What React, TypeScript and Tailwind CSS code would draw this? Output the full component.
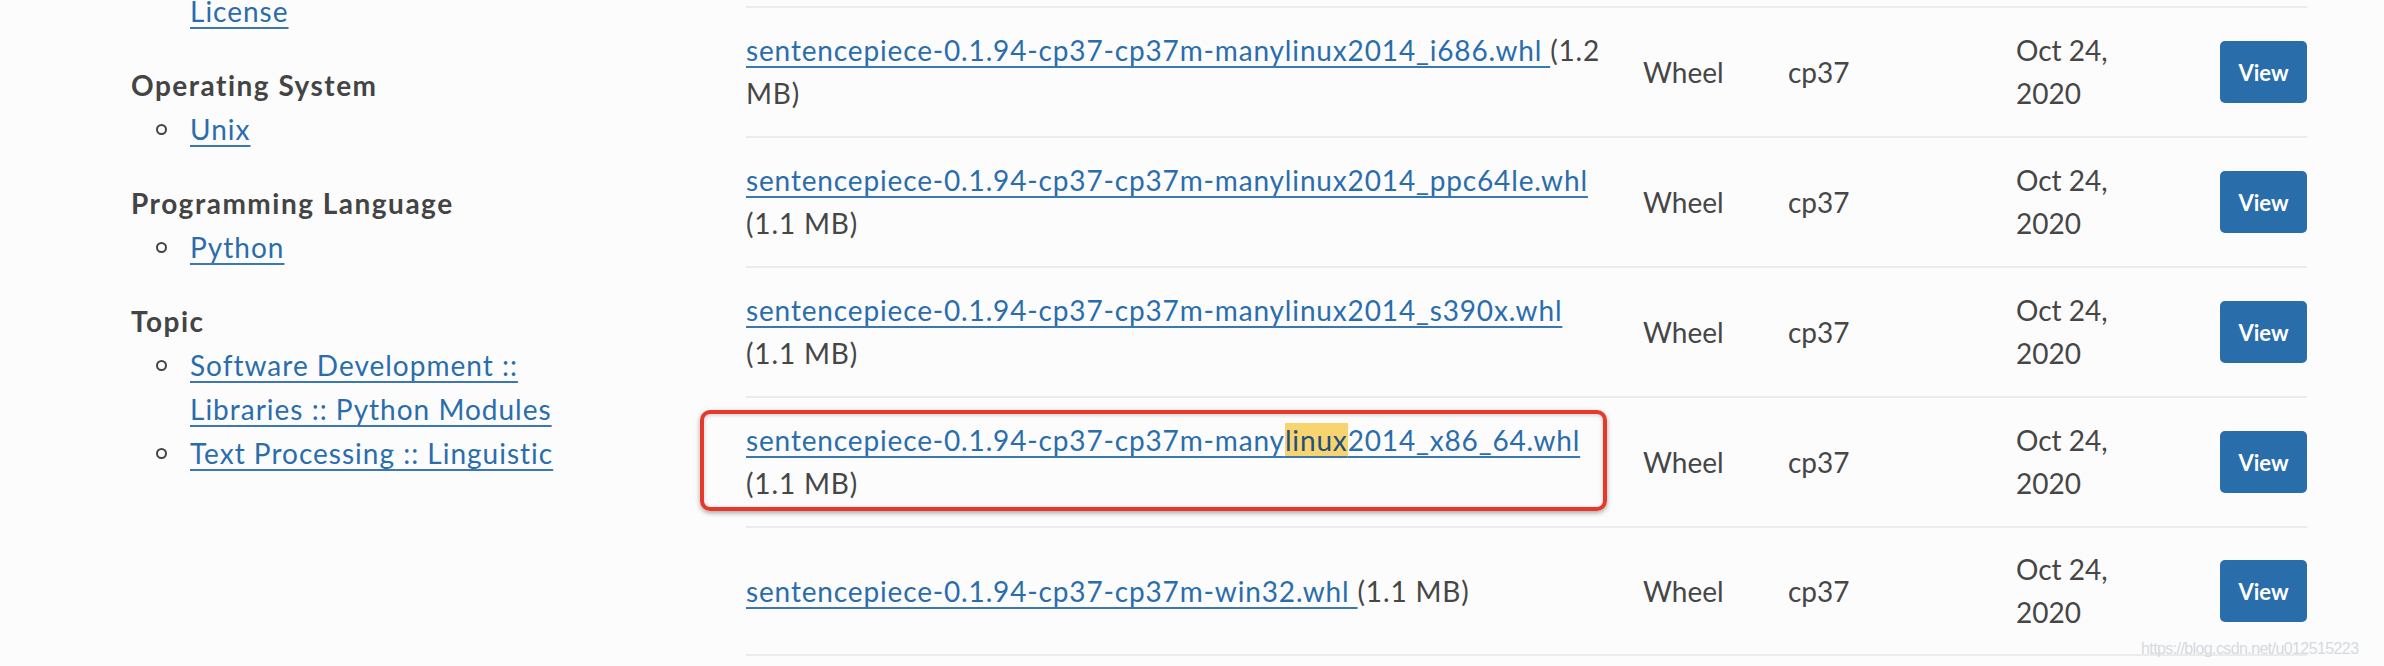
import React from 'react';

type FileRow = {
  name: string;
  size: string;
  mark?: [string, string, string];
};

const FILES: FileRow[] = [
  { name: 'sentencepiece-0.1.94-cp37-cp37m-manylinux2014_i686.whl', size: '1.2 MB' },
  { name: 'sentencepiece-0.1.94-cp37-cp37m-manylinux2014_ppc64le.whl', size: '1.1 MB' },
  { name: 'sentencepiece-0.1.94-cp37-cp37m-manylinux2014_s390x.whl', size: '1.1 MB' },
  {
    name: 'sentencepiece-0.1.94-cp37-cp37m-manylinux2014_x86_64.whl',
    size: '1.1 MB',
    mark: ['sentencepiece-0.1.94-cp37-cp37m-many', 'linux', '2014_x86_64.whl'],
  },
  { name: 'sentencepiece-0.1.94-cp37-cp37m-win32.whl', size: '1.1 MB' },
];

const CLASSIFIERS = [
  { title: 'Operating System', items: [['Unix']] },
  { title: 'Programming Language', items: [['Python']] },
  {
    title: 'Topic',
    items: [['Software Development ::', 'Libraries :: Python Modules'], ['Text Processing :: Linguistic']],
  },
];

const linkCls =
  'text-[#2a6dac] underline decoration-2 underline-offset-[5px] decoration-[#3b78b3]';

const Sidebar = () => (
  <div className="w-[746px] shrink-0 pl-[131px] -mt-[11px] leading-[44px]">
    <div className="mb-[30px] pl-[59px] tracking-[1px]">
      <a href="#" className={linkCls}>License</a>
    </div>
    {CLASSIFIERS.map((c) => (
      <div key={c.title} className="mb-[30px]">
        <h6 className="font-bold tracking-[1.5px] text-[#444]">{c.title}</h6>
        <ul>
          {c.items.map((lines) => (
            <li key={lines[0]} className="flex items-start">
              <span className="mt-[17px] ml-[25px] mr-[23px] h-[11px] w-[11px] shrink-0 rounded-full border-2 border-[#444]" />
              <a href="#" className={`${linkCls} tracking-[1px]`}>
                {lines.map((l, i) => (
                  <React.Fragment key={l}>
                    {i > 0 && <br />}
                    {l}
                  </React.Fragment>
                ))}
              </a>
            </li>
          ))}
        </ul>
      </div>
    ))}
  </div>
);

const FileTable = () => (
  <div className="w-[1561px] shrink-0 pt-[6px]">
    {FILES.map((f, i) => (
      <div
        key={f.name}
        className={`grid h-[130px] grid-cols-[897px_145px_228px_1fr_87px] items-center border-t-2 border-[#ebebeb] leading-[43px] ${
          i === FILES.length - 1 ? 'border-b-2' : ''
        }`}
      >
        <div className="w-[861px] tracking-[0.85px]">
          <a href="#" className={linkCls}>
            {f.mark ? (
              <>
                {f.mark[0]}
                <span className="bg-[#f7d46f] text-[#1f4f7e]">{f.mark[1]}</span>
                {f.mark[2] + ' '}
              </>
            ) : (
              f.name + ' '
            )}
          </a>
          ({f.size})
        </div>
        <div>Wheel</div>
        <div>cp37</div>
        <div className="w-[120px]">Oct 24, 2020</div>
        <button className="h-[62px] w-[87px] rounded-[5px] bg-[#2a6dab] text-[22px] font-bold text-white">
          View
        </button>
      </div>
    ))}
  </div>
);

export default function App() {
  return (
    <div className="relative flex h-[666px] w-[2384px] overflow-hidden bg-[#fcfcfd] font-['Lato',sans-serif] text-[28px] text-[#464646]">
      <Sidebar />
      <FileTable />
      {/* annotation box drawn over the x86_64 row */}
      <div className="pointer-events-none absolute left-[700px] top-[410px] h-[101px] w-[907px] rounded-[10px] border-4 border-[#e5392c] shadow-[0_2px_5px_rgba(0,0,0,0.35),inset_0_1px_4px_rgba(0,0,0,0.2)]" />
      <div className="absolute left-[2141px] top-[637px] font-['Liberation_Sans',sans-serif] text-[16px] tracking-[-0.6px] text-[#d5dadf]">
        https://blog.csdn.net/u012515223
      </div>
    </div>
  );
}
